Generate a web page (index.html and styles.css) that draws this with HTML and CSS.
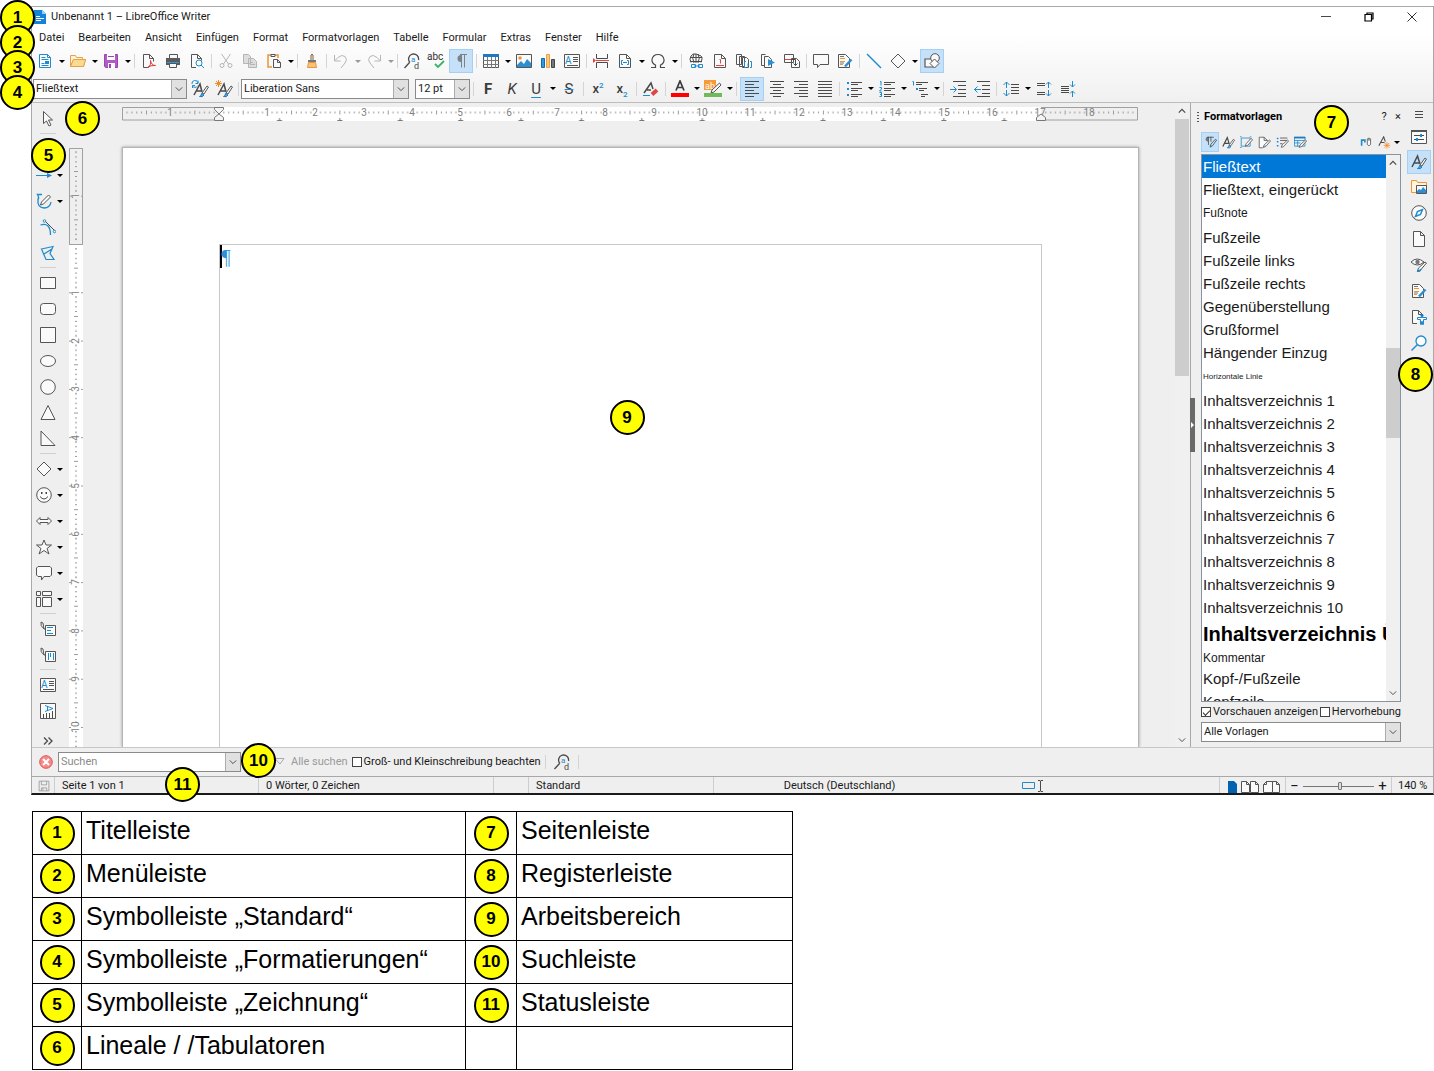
FILE: index.html
```html
<!DOCTYPE html>
<html lang="de">
<head>
<meta charset="utf-8">
<meta name="viewport" content="width=device-width, initial-scale=1">
<title>LibreOffice Writer – Programmfenster</title>
<link rel="stylesheet" href="styles.css">
</head>
<body>
<svg class="sprite" aria-hidden="true">
  <defs>
    <symbol id="app" viewBox="0 0 16 16"><path fill="#1583d8" d="M2 1h8l4 4v10H2z"/><path fill="#8fd0ff" d="M10 1l4 4h-4z"/><path stroke="#fff" d="M4 7.500h4M4 9.500h8M4 11.500h5"/></symbol>
    <symbol id="new" viewBox="0 0 16 16"><path class="b w" d="M2.500 1.500h8l3 3v10h-11z"/><path class="b" d="M10.500 1.500v3h3M4.500 4.500h4M4.500 6.500h7M4.500 12.500h7M4.500 10.500h3"/><path fill="#1e8bcd" d="M8 8h4v3H8z"/></symbol>
    <symbol id="open" viewBox="0 0 16 16"><path fill="#fff3dc" stroke="#e8a14a" d="M.500 13.500v-11h5l1 2h6v2M.500 13.500l3-7h12l-2 7z"/><path fill="#f8db8f" stroke="#e8a14a" d="M3.500 6.500h12l-2 7h-13z"/></symbol>
    <symbol id="save" viewBox="0 0 16 16"><path fill="#b15cc5" stroke="#9b45b2" d="M1.500 1.500h13v13h-12l-1-1z"/><path fill="#fff" d="M4 1h8v6H4zM5 10h7v5H5z"/><path fill="#9b45b2" d="M6 11h2v4H6zM5 3h6v1H5z"/></symbol>
    <symbol id="pdf" viewBox="0 0 16 16"><path class="w" d="M7.500 14.500h-5v-13h6l4 4v3M8.500 1.500v4h4"/><path fill="none" stroke="#d83a3a" d="M6.500 14.500q4-2 3-7 1 5 5 5-5-.500-8 2z"/></symbol>
    <symbol id="print" viewBox="0 0 16 16"><path class="w" d="M4.500 5v-3.500h8v3.500"/><path fill="#5c5c5c" d="M1 5h14v7H1z"/><path fill="#2d9ae0" d="M2 9h12v1H2z"/><path class="w" d="M4.500 10.500h7v4h-7z"/></symbol>
    <symbol id="preview" viewBox="0 0 16 16"><path class="w" d="M7 14.500H2.500v-13h6l4 4v2M8.500 1.500v4h4"/><circle class="b w" cx="10" cy="10" r="3"/><path class="b" d="M12 12l3 3"/></symbol>
    <symbol id="cut" viewBox="0 0 16 16"><path class="g" d="M3.500 1l7 10M12.500 1l-7 10"/><circle class="g" cx="4" cy="12.500" r="2"/><circle class="g" cx="12" cy="12.500" r="2"/></symbol>
    <symbol id="copy" viewBox="0 0 16 16"><path fill="#ddd" stroke="#b5b5b5" d="M1.500 1.500h5l2 2v7h-7zM6.500 5.500h5l3 3v6h-8z"/><path class="g" d="M8 9.500h3M8 11.500h5"/></symbol>
    <symbol id="paste" viewBox="0 0 16 16"><path fill="none" stroke="#e8973a" stroke-width="1.500" d="M5 2H2v12h4M9 2h3v3"/><path class="w" d="M5 1.500h4v2H5zM7.500 6.500h4l3 3v5h-7zM11.500 6.500v3h3"/></symbol>
    <symbol id="brush" viewBox="0 0 16 16"><path fill="#fff" stroke="#7a5a3a" d="M7 7V2q1-1.500 2 0v5"/><path fill="#777" d="M4 7h8v2H4z"/><path fill="#f8c27a" stroke="#e8973a" d="M4.500 9.500h7l1 5h-9z"/></symbol>
    <symbol id="undo" viewBox="0 0 16 16"><path class="g" d="M1.500 2v6h6M2 7.500l3-3q4-3.500 7-1 3 3 0 6.500l-4 5"/></symbol>
    <symbol id="redo" viewBox="0 0 16 16"><path class="g" d="M14.500 2v6h-6M14 7.500l-3-3q-4-3.500-7-1-3 3 0 6.500l4 5"/></symbol>
    <symbol id="find" viewBox="0 0 16 16"><path class="k" stroke-width="1.300" d="M14.500 7A5 5 0 1 0 6 9.500M5.500 9.500l-5 5.500"/><text class="bt" x="7" y="8.500" font-size="8">a</text><text x="10" y="15.500" font-size="9" fill="#4a4a4a">d</text></symbol>
    <symbol id="spell" viewBox="0 0 18 18"><text x="0" y="8" font-size="10" fill="#333">abc</text><path fill="none" stroke="#35b56a" stroke-width="1.800" d="M8 12l3 3 6-6"/></symbol>
    <symbol id="pil" viewBox="0 0 16 16"><path fill="#808080" d="M8 2v7a3.500 3.500 0 0 1 0-7z"/><path stroke="#808080" fill="none" d="M7 1.500h7M8.500 1.500v13M11.500 1.500v13"/></symbol>
    <symbol id="table" viewBox="0 0 16 16"><path class="w" d="M.500 1.500h15v13H.500z"/><path fill="#1e78c8" d="M0 1h16v3H0z"/><path stroke="#777" fill="none" d="M0 7.500h16M0 11.500h16M4.500 4v11M8.500 4v11M12.500 4v11"/></symbol>
    <symbol id="image" viewBox="0 0 16 16"><path class="w" d="M.500 1.500h15v13H.500z"/><circle cx="4" cy="5" r="1.800" fill="#f0953a"/><path fill="#2d8fd0" d="M1 12l4-4 3 3 3-5 4 4v4H1z"/></symbol>
    <symbol id="chart" viewBox="0 0 16 16"><path fill="#2d9ae0" stroke="#156aa8" d="M1.500 5.500h3v9h-3z"/><path fill="#f8c878" stroke="#e8a14a" d="M6.500 1.500h3v13h-3z"/><path fill="#777" stroke="#444" d="M11.500 6.500h3v8h-3z"/></symbol>
    <symbol id="tbox" viewBox="0 0 16 16"><path class="w" d="M.500 1.500h15v13H.500z"/><text class="bt" x="1" y="10.500" font-size="10">A</text><path stroke="#555" d="M9 4.500h5M9 6.500h5M9 8.500h5M3 12.500h11"/></symbol>
    <symbol id="break" viewBox="0 0 16 16"><path class="k" d="M3.500 1v4.500h11V1M3.500 15V9.500h11V15"/><path stroke="#e04545" d="M3 7.500h13"/><path fill="#e04545" d="M0 5l3 2.500L0 10z"/></symbol>
    <symbol id="field" viewBox="0 0 16 16"><path class="w" d="M2.500 1.500h7l4 4v9h-11zM9.500 1.500v4h4"/><path class="b" d="M6 7.500H4.500v4H6M10 7.500h1.500v4H10M6 9.500h4"/></symbol>
    <symbol id="omega" viewBox="0 0 16 16"><path class="k" stroke-width="1.200" d="M1 14.500h4.500V12Q1.500 10 2 6.500 3 1.500 8 1.500T14 6.500Q14.500 10 10.500 12v2.500H15"/></symbol>
    <symbol id="link" viewBox="0 0 16 16"><path class="k" d="M3 9.500Q1 6 3 3t5-2 5 2 0 6.500M2 4.500h12M2 8.500h12M8 1v9M6 1Q3.500 5 6 10M10 1q2.500 4 0 9"/><path class="b w" d="M3.500 11.500h4v3h-4zM10.500 11.500h4v3h-4z"/><path class="b" d="M6 13h6"/></symbol>
    <symbol id="foot" viewBox="0 0 16 16"><path class="w" d="M2.500 1.500h7l4 4v9h-11zM9.500 1.500v4h4"/><path stroke="#e04545" fill="none" d="M4 12.500h8M7.500 6.500h1v4"/></symbol>
    <symbol id="end" viewBox="0 0 16 16"><path class="w" d="M.500 1.500h5v10h-5zM3.500 3.500h5v10h-5zM6.500 4.500h4l2 2v8h-6z"/><path class="b w" d="M10 8.500H8.500v6H10M14 8.500h1.500v6H14M12 10.500v3"/></symbol>
    <symbol id="book" viewBox="0 0 16 16"><path class="w" d="M4 12.500H1.500v-11h4M4.500 3.500h4l3 3v8h-7z"/><path fill="#2d8fd0" d="M8 6l7 3.500L8 13z"/></symbol>
    <symbol id="cross" viewBox="0 0 16 16"><path class="w" d="M.500 1.500h9v8h-9zM7.500 5.500h5l3 3v6h-8z"/><path stroke="#e04545" d="M1 6.500h6"/><path class="k" d="M7 6.500h4.500v6M9.500 10.500l2 2 2-2"/></symbol>
    <symbol id="comment" viewBox="0 0 16 16"><path class="w" d="M.500 1.500h15v10H7l-2.500 3v-3h-4z"/></symbol>
    <symbol id="track" viewBox="0 0 16 16"><path class="w" d="M1.500 1.500h7l4 4v9h-11z"/><path stroke="#e8973a" d="M3 5.500h5M3 8.500h5M3 11.500h3"/><path stroke="#777" d="M3 3.500h4M3 10h4"/><path stroke="#2d8fd0" stroke-width="2.500" d="M14.500 6.500L8 13.500"/></symbol>
    <symbol id="line" viewBox="0 0 16 16"><path class="b" stroke-width="1.400" d="M1 1l14 14"/></symbol>
    <symbol id="diamond" viewBox="0 0 16 16"><path class="w" d="M8 1l7 7-7 7-7-7z"/></symbol>
    <symbol id="shapes" viewBox="0 0 16 16"><path class="w" stroke-width="1.200" d="M1 6h9v8H1z"/><circle class="w" cx="11" cy="5" r="4.300"/><path class="w" d="M10.500 6l4.500 4.500-4.500 4.500L6 10.500z"/></symbol>
    <symbol id="abrush" viewBox="0 0 16 16"><path class="k" stroke-width="1.500" d="M1 13L6.500 2 9 10M3.500 9H8"/><path class="w" d="M9 11l5-7 1.500 1L11 12z"/><path fill="#4aa8e8" stroke="#1e78c8" d="M6.500 14.500q2-.500 2-3l2.500 1.500q-1 2.500-4.500 1.500z"/></symbol>
    <symbol id="update" viewBox="0 0 18 18"><path class="k" stroke-width="1.500" d="M3 15L9 4l2 8M5 11h5"/><path class="w" d="M11 13l5-7 1.500 1L13 14z"/><path fill="#4aa8e8" stroke="#1e78c8" d="M8.500 16.500q2-.500 2-3l2.500 1.500q-1 2.500-4.500 1.500z"/><path class="b" d="M1 4a3 3 0 0 1 6-1M7 .500v3H4.500M1.500 8V5.500H4M1.500 6a3 3 0 0 0 5 0"/></symbol>
    <symbol id="newstyle" viewBox="0 0 18 18"><path class="k" stroke-width="1.500" d="M3 15L9 4l2 8M5 11h5"/><path class="w" d="M11 13l5-7 1.500 1L13 14z"/><path fill="#4aa8e8" stroke="#1e78c8" d="M8.500 16.500q2-.500 2-3l2.500 1.500q-1 2.500-4.500 1.500z"/><path stroke="#f08a24" d="M0 3.500h7M3.500 0v7M1 1l5 5M6 1L1 6"/></symbol>
    <symbol id="eraser" viewBox="0 0 16 16"><path class="k" stroke-width="1.500" d="M1 12L8 2l2 6M4 9h4"/><path stroke="#e04545" stroke-width="4" d="M9 13.500l5-4.500"/><path class="b" d="M0 14.500h7"/></symbol>
    <symbol id="fcolor" viewBox="0 0 18 18"><path fill="none" stroke="#3c3c3c" stroke-width="1.700" d="M5 10.500L9 1l4 9.500M6 7.500h6"/><path fill="red" d="M0 13h18v4H0z"/></symbol>
    <symbol id="hilite" viewBox="0 0 18 18"><path fill="#f79a3a" d="M0 0h12v10H0z"/><text x="1" y="9" font-size="9" fill="#fff">ab</text><path class="w" d="M15.500 3l1.500 2-7 7-3 1 1-3z"/><path fill="#6dbb5a" d="M0 13h18v4H0z"/></symbol>
    <symbol id="al" viewBox="0 0 16 16"><path class="k" d="M1 .500h14M1 3.500h9M1 6.500h14M1 9.500h9M1 12.500h14M1 15.500h9"/></symbol>
    <symbol id="ac" viewBox="0 0 16 16"><path class="k" d="M1 .500h14M4 3.500h8M1 6.500h14M4 9.500h8M1 12.500h14M4 15.500h8"/></symbol>
    <symbol id="ar" viewBox="0 0 16 16"><path class="k" d="M1 .500h14M6 3.500h9M1 6.500h14M6 9.500h9M1 12.500h14M6 15.500h9"/></symbol>
    <symbol id="aj" viewBox="0 0 16 16"><path class="k" d="M1 .500h14M1 3.500h14M1 6.500h14M1 9.500h14M1 12.500h14M1 15.500h14"/></symbol>
    <symbol id="bullets" viewBox="0 0 16 16"><path class="k" d="M5 1.500h11M5 3.500h7M5 7.500h11M5 9.500h7M5 13.500h11M5 15.500h7"/><path fill="#1e8bcd" d="M1 1h2v2H1zM1 7h2v2H1zM1 13h2v2H1z"/></symbol>
    <symbol id="numbers" viewBox="0 0 16 16"><path class="k" d="M5 1.500h11M5 3.500h7M5 7.500h11M5 9.500h7M5 13.500h11M5 15.500h7"/><path class="b" d="M1 .500h1v4M.500 6.500h2v1.500l-2 2h2M.500 11.500h2v4h-2M1 13.500h1"/></symbol>
    <symbol id="outline" viewBox="0 0 16 16"><path class="k" d="M4 1.500h12M4 3.500h6M7 7.500h8M7 9.500h5M9 13.500h7M9 15.500h4"/><path class="b" d="M.500.500h1v4"/><path fill="#1e8bcd" d="M4 7h2v2H4z"/></symbol>
    <symbol id="indent" viewBox="0 0 16 16"><path class="k" d="M3 .500h13M8 4.500h8M8 8.500h8M8 12.500h8M3 15.500h13"/><path class="b" d="M0 8.500h6M3.500 5.500l3 3-3 3"/></symbol>
    <symbol id="outdent" viewBox="0 0 16 16"><path class="k" d="M3 .500h13M8 4.500h8M8 8.500h8M8 12.500h8M3 15.500h13"/><path class="b" d="M7 8.500H0M3.500 5.500l-3 3 3 3"/></symbol>
    <symbol id="spacing" viewBox="0 0 16 16"><path class="k" d="M8 3.500h8M8 6.500h8M8 9.500h8M8 12.500h8"/><path class="b" d="M3.500 1v6M.500 4l3-3 3 3M3.500 9v6M.500 12l3 3 3-3"/></symbol>
    <symbol id="incp" viewBox="0 0 16 16"><path class="k" d="M1 2.500h8M1 4.500h8M1 11.500h8M1 13.500h8"/><path class="b" d="M12.500 1v6M10 3.500L12.500 1 15 3.500M12.500 9v6M10 12.500l2.500 2.500 2.500-2.500"/></symbol>
    <symbol id="decp" viewBox="0 0 16 16"><path class="k" d="M1 5.500h8M1 7.500h8M1 9.500h8M1 11.500h8"/><path class="b" d="M12.500 0v6M10 3.500L12.500 6 15 3.500M12.500 16v-6M10 12.500l2.500-2.500 2.500 2.500"/></symbol>
    <symbol id="pointer" viewBox="0 0 16 16"><path class="w" d="M3.500.500v12l3-2.500 2.500 5 2-1-2.500-5h4z"/></symbol>
    <symbol id="arrowline" viewBox="0 0 16 16"><path class="b" d="M0 8.500h12"/><path fill="#1e8bcd" d="M11 6l5 2.500-5 2.500z"/></symbol>
    <symbol id="curve" viewBox="0 0 16 16"><path class="b" stroke-width="1.300" d="M6 1.500H1.500q2 3 .5 5-1 8 6 8.500 6 0 7-6"/><path class="w" d="M12.500 2l2 2-7 7-3 1 1-3z"/></symbol>
    <symbol id="bezier" viewBox="0 0 16 16"><path class="b" stroke-width="1.300" d="M.500 6q10-3 10 10"/><path class="k" d="M5 2l10 10"/><circle class="b w" cx="4.500" cy="2" r="1.300"/><circle class="b w" cx="14.500" cy="12.500" r="1.300"/></symbol>
    <symbol id="poly" viewBox="0 0 16 16"><path class="b" stroke-width="1.200" d="M1.500 4L13 1.500l-3 7 4 6H6zM4 9l8-5"/></symbol>
    <symbol id="rect" viewBox="0 0 16 16"><path class="w" d="M.500 2.500h15v11H.500z"/></symbol>
    <symbol id="rrect" viewBox="0 0 16 16"><rect class="w" x=".5" y="2.500" width="15" height="11" rx="3"/></symbol>
    <symbol id="square" viewBox="0 0 16 16"><path class="w" d="M.500.500h15v15H.500z"/></symbol>
    <symbol id="ellipse" viewBox="0 0 16 16"><ellipse class="w" cx="8" cy="8" rx="7.500" ry="5.500"/></symbol>
    <symbol id="circle" viewBox="0 0 16 16"><circle class="w" cx="8" cy="8" r="7.300"/></symbol>
    <symbol id="tri" viewBox="0 0 16 16"><path class="w" d="M8 .500l7 14H1z"/></symbol>
    <symbol id="rtri" viewBox="0 0 16 16"><path class="w" d="M1 0v14.500h14z"/></symbol>
    <symbol id="smile" viewBox="0 0 16 16"><circle class="w" cx="8" cy="8" r="7.300"/><path class="k" d="M4 9.500q4 5 8 0"/><path fill="#444" d="M5 5h1.500v2H5zM9.500 5H11v2H9.500z"/></symbol>
    <symbol id="harrow" viewBox="0 0 16 16"><path class="w" d="M.500 8L4 4.500v2h8v-2L15.500 8 12 11.500v-2H4v2z"/></symbol>
    <symbol id="star" viewBox="0 0 16 16"><path class="w" d="M8 1l2 5h5.500l-4.500 3.500 2 5.500-5-3.500L3 15l2-5.500L.500 6H6z"/></symbol>
    <symbol id="balloon" viewBox="0 0 16 16"><path class="w" d="M2 1.500h12l1.500 1.500v7L14 11.500H8L5.500 15v-3.500H2L.500 10V3z"/></symbol>
    <symbol id="flow" viewBox="0 0 16 16"><path class="w" d="M.500.500h4v4h-4zM6.500.500h9v4h-9zM.500 6.500h4v9h-4zM6.500 6.500h9v9h-9z"/></symbol>
    <symbol id="callh" viewBox="0 0 16 16"><path class="w" d="M1 1l2 1 1 6h3M1 1q-1 4 3 7"/><path class="w" d="M5.500 4.500h10v10h-10z"/><path class="b" d="M7 6.500h6M7 9.500h4M7 12.500h6"/></symbol>
    <symbol id="callv" viewBox="0 0 16 16"><path class="w" d="M1 1l2 1 1 6h3M1 1q-1 4 3 7"/><path class="w" d="M5.500 4.500h10v10h-10z"/><path class="b" d="M8.500 6v7M10.500 6v4M13.500 6v7"/></symbol>
    <symbol id="vbox" viewBox="0 0 16 16"><path class="w" d="M.500.500h15v15H.500z"/><path class="b" d="M5 2.500l8 3-8 3M7.500 3v5"/><path class="k" d="M3.500 11v4M6.500 10v5M9.500 10v5M12.500 8v7"/></symbol>
    <symbol id="close" viewBox="0 0 16 16"><circle cx="8" cy="8" r="6.300" fill="#f58a8a" stroke="#e05555"/><path stroke="#fff" stroke-width="2" d="M5 5l6 6M11 5l-6 6"/></symbol>
    <symbol id="gsave" viewBox="0 0 16 16"><path fill="none" stroke="#909090" d="M1.500 1.500h13v13h-13zM4.500 1.500v5h7v-5M4.500 14.500v-4h7v4M6.500 11v3"/></symbol>
    <symbol id="frame" viewBox="0 0 16 16"><path class="b" fill="#fff" d="M1.500 2.500h11v10h-11zM0 1h2M12 1h2M0 14h2"/><path class="w" d="M13.500 3l2 1.500-6 7-3 1 1-3z"/></symbol>
    <symbol id="pagest" viewBox="0 0 16 16"><path class="w" d="M6 14.500H1.500v-13h6l4 4v1M7.500 1.500v4h4M14 5l1.500 1-6 7-3 1 1-3z"/><path class="b" d="M7 13.500l2-2"/></symbol>
    <symbol id="listst" viewBox="0 0 16 16"><path class="k" d="M5 2.500h9M5 5.500h9M5 9.500h3"/><path fill="#1e8bcd" d="M1 2h2v2H1zM1 6h2v2H1zM1 11h2v2H1z"/><path class="w" d="M14 5l1.500 1-6 7-3 1 1-3z"/></symbol>
    <symbol id="tablest" viewBox="0 0 16 16"><path class="b" fill="#fff" d="M.500 1.500h13v11H.500zM0 5.500h13M0 8.500h8M4.500 5v8"/><path fill="#1e78c8" d="M0 1h14v2H0z"/><path class="w" d="M14 5l1.500 1-6 7-3 1 1-3z"/></symbol>
    <symbol id="parst" viewBox="0 0 16 16"><path fill="#777" d="M5 1v6a3 3 0 0 1 0-6z"/><path class="k" d="M4 1.500h8M5.500 1v10M8.500 1v6M14 4l1.500 1-5 7-3 1 1-3z"/><path class="b" d="M7 13.500q2 1 3-1.500"/></symbol>
    <symbol id="fill" viewBox="0 0 16 16"><path fill="#1e8bcd" d="M1 4h6v4H5V6H3v6H1z"/><path class="w" d="M9 3.500h4v7q-2 3-4 0zM11 2v4"/></symbol>
    <symbol id="starA" viewBox="0 0 16 16"><path class="k" stroke-width="1.300" d="M1 12L7 1l2 6M3 8h5"/><path stroke="#f08a24" d="M7 11.500h8M11 7.500v8M8 8.500l6 6M14 8.500l-6 6"/></symbol>
    <symbol id="props" viewBox="0 0 16 16"><path class="w" d="M.500 1.500h15v13H.500z"/><path fill="#555" d="M0 1h16v2H0z"/><path class="k" d="M3 6.500h10M3 10.500h10"/><path fill="#1e8bcd" d="M9 5h2v3H9zM5 9h2v3H5z"/></symbol>
    <symbol id="gallery" viewBox="0 0 16 16"><path fill="#fff3dc" stroke="#e8973a" d="M.500 13.500v-12h5l1 2h9v10z"/><path class="w" d="M5.500 6.500h10v8h-10z"/><path fill="#2d8fd0" d="M6 12l2-2 2 1 2-3 3 3v3H6z"/></symbol>
    <symbol id="compass" viewBox="0 0 16 16"><circle class="w" cx="8" cy="8" r="7.300"/><path class="b" stroke-width="1.500" d="M11.500 4.500L9.500 9.500l-5 2 2-5z"/></symbol>
    <symbol id="page" viewBox="0 0 16 16"><path class="w" d="M2.500.500h7l4 4v11h-11zM9.500.500v4h4"/></symbol>
    <symbol id="inspect" viewBox="0 0 16 16"><path class="w" d="M0 5q6-6 13 0-7 6-13 0z"/><circle cx="6.500" cy="5" r="2.200" fill="#777"/><path class="w" d="M14 5l1.500 1-6 7-3 1 1-3z"/><path class="b" stroke-width="1.500" d="M6 14q3 1 4-2"/></symbol>
    <symbol id="access" viewBox="0 0 16 16"><path class="w" d="M6 14.500H1.500v-13h6l4 4v1M7.500 1.500v4h4"/><path class="b w" d="M6.500 8.500h9v2h-3v5h-1v-3h-1v3h-1v-5h-3z"/><circle cx="11" cy="6.500" r="1.500" fill="#1e78c8"/></symbol>
    <symbol id="lens" viewBox="0 0 16 16"><circle class="b w" cx="10" cy="6" r="5" stroke-width="1.300"/><path class="b" stroke-width="1.400" d="M6.500 9.500L.500 15.500"/></symbol>
    <symbol id="down" viewBox="0 0 10 10"><path class="k" stroke-width="1.200" d="M1 3l4 4 4-4"/></symbol>
    <symbol id="up" viewBox="0 0 10 10"><path class="k" stroke-width="1.500" d="M1 7l4-4 4 4"/></symbol>
  </defs>
</svg>

<main class="window">
  <header class="chrome">
    <div class="titlebar">
      <svg class="ico"><use href="#app"/></svg>
      <h1 class="title">Unbenannt 1 – LibreOffice Writer</h1>
      <div class="winbuttons">
        <button aria-label="Minimieren"><svg viewBox="0 0 10 10"><path class="k" d="M0 4.500h10"/></svg></button>
        <button aria-label="Wiederherstellen"><svg viewBox="0 0 10 10"><path fill="none" stroke="#000" stroke-width="1.200" d="M1 2.500h6.500V9H1zM3 2.500V1h6v6H7.500"/></svg></button>
        <button aria-label="Schließen"><svg viewBox="0 0 10 10"><path fill="none" stroke="#333" d="M.500.500l9 9M9.500.500l-9 9"/></svg></button>
      </div>
    </div>
    <nav class="menubar">
      <button>Datei</button><button>Bearbeiten</button><button>Ansicht</button><button>Einfügen</button><button>Format</button><button>Formatvorlagen</button><button>Tabelle</button><button>Formular</button><button>Extras</button><button>Fenster</button><button>Hilfe</button>
    </nav>
    <div class="toolbar" role="toolbar" aria-label="Standard">
      <button class="tool" aria-label="Neu"><svg class="ico"><use href="#new"/></svg></button><button class="drop" aria-label="Neu: Auswahl"></button>
      <button class="tool" aria-label="Öffnen"><svg class="ico"><use href="#open"/></svg></button><button class="drop" aria-label="Öffnen: Auswahl"></button>
      <button class="tool" aria-label="Speichern"><svg class="ico"><use href="#save"/></svg></button><button class="drop" aria-label="Speichern: Auswahl"></button>
      <i class="sep"></i>
      <button class="tool" aria-label="PDF"><svg class="ico"><use href="#pdf"/></svg></button>
      <button class="tool" aria-label="Drucken"><svg class="ico"><use href="#print"/></svg></button>
      <button class="tool" aria-label="Druckvorschau"><svg class="ico"><use href="#preview"/></svg></button>
      <i class="sep"></i>
      <button class="tool" aria-label="Ausschneiden"><svg class="ico"><use href="#cut"/></svg></button>
      <button class="tool" aria-label="Kopieren"><svg class="ico"><use href="#copy"/></svg></button>
      <button class="tool" aria-label="Einfügen"><svg class="ico"><use href="#paste"/></svg></button><button class="drop" aria-label="Einfügen: Auswahl"></button>
      <i class="sep"></i>
      <button class="tool" aria-label="Format übertragen"><svg class="ico"><use href="#brush"/></svg></button>
      <i class="sep"></i>
      <button class="tool" aria-label="Rückgängig"><svg class="ico"><use href="#undo"/></svg></button><button class="drop off" aria-label="Rückgängig: Auswahl"></button>
      <button class="tool" aria-label="Wiederherstellen"><svg class="ico"><use href="#redo"/></svg></button><button class="drop off" aria-label="Wiederherstellen: Auswahl"></button>
      <i class="sep"></i>
      <button class="tool" aria-label="Suchen und Ersetzen"><svg class="ico"><use href="#find"/></svg></button>
      <button class="tool" aria-label="Rechtschreibung"><svg class="ico wide"><use href="#spell"/></svg></button>
      <button class="tool on" aria-label="Formatierungszeichen"><svg class="ico"><use href="#pil"/></svg></button>
      <i class="sep"></i>
      <button class="tool" aria-label="Tabelle"><svg class="ico"><use href="#table"/></svg></button><button class="drop" aria-label="Tabelle: Auswahl"></button>
      <button class="tool" aria-label="Bild"><svg class="ico"><use href="#image"/></svg></button>
      <button class="tool" aria-label="Diagramm"><svg class="ico"><use href="#chart"/></svg></button>
      <button class="tool" aria-label="Textfeld"><svg class="ico"><use href="#tbox"/></svg></button>
      <i class="sep"></i>
      <button class="tool" aria-label="Seitenumbruch"><svg class="ico"><use href="#break"/></svg></button>
      <button class="tool" aria-label="Feldbefehl"><svg class="ico"><use href="#field"/></svg></button><button class="drop" aria-label="Feldbefehl: Auswahl"></button>
      <button class="tool" aria-label="Sonderzeichen"><svg class="ico"><use href="#omega"/></svg></button><button class="drop" aria-label="Sonderzeichen: Auswahl"></button>
      <i class="sep"></i>
      <button class="tool" aria-label="Hyperlink"><svg class="ico"><use href="#link"/></svg></button>
      <button class="tool" aria-label="Fußnote"><svg class="ico"><use href="#foot"/></svg></button>
      <button class="tool" aria-label="Endnote"><svg class="ico"><use href="#end"/></svg></button>
      <button class="tool" aria-label="Lesezeichen"><svg class="ico"><use href="#book"/></svg></button>
      <button class="tool" aria-label="Querverweis"><svg class="ico"><use href="#cross"/></svg></button>
      <i class="sep"></i>
      <button class="tool" aria-label="Kommentar"><svg class="ico"><use href="#comment"/></svg></button>
      <button class="tool" aria-label="Änderungen"><svg class="ico"><use href="#track"/></svg></button>
      <i class="sep"></i>
      <button class="tool" aria-label="Linie"><svg class="ico"><use href="#line"/></svg></button>
      <button class="tool" aria-label="Standardformen"><svg class="ico"><use href="#diamond"/></svg></button><button class="drop" aria-label="Standardformen: Auswahl"></button>
      <button class="tool on" aria-label="Zeichnungsfunktionen"><svg class="ico"><use href="#shapes"/></svg></button>
    </div>
    <div class="toolbar format" role="toolbar" aria-label="Formatierungen">
      <div class="combo w-style"><select aria-label="Absatzvorlage"><option>Fließtext</option></select><span><svg><use href="#down"/></svg></span></div>
      <button class="tool" aria-label="Vorlage aktualisieren"><svg class="ico wide"><use href="#update"/></svg></button>
      <button class="tool" aria-label="Neue Vorlage"><svg class="ico wide"><use href="#newstyle"/></svg></button>
      <i class="sep"></i>
      <div class="combo w-font"><select aria-label="Schriftart"><option>Liberation Sans</option></select><span><svg><use href="#down"/></svg></span></div>
      <div class="combo w-size"><select aria-label="Schriftgröße"><option>12 pt</option></select><span><svg><use href="#down"/></svg></span></div>
      <i class="sep"></i>
      <button class="tool glyph"><b>F</b></button>
      <button class="tool glyph"><em>K</em></button>
      <button class="tool glyph"><u>U</u></button><button class="drop" aria-label="Unterstreichen: Auswahl"></button>
      <button class="tool glyph"><s>S</s></button>
      <i class="sep"></i>
      <button class="tool glyph small"><span>x<sup>2</sup></span></button>
      <button class="tool glyph small"><span>x<sub>2</sub></span></button>
      <i class="sep"></i>
      <button class="tool" aria-label="Direkte Formatierung löschen"><svg class="ico"><use href="#eraser"/></svg></button>
      <i class="sep"></i>
      <button class="tool" aria-label="Schriftfarbe"><svg class="ico wide"><use href="#fcolor"/></svg></button><button class="drop" aria-label="Schriftfarbe: Auswahl"></button>
      <button class="tool" aria-label="Zeichenhervorhebung"><svg class="ico wide"><use href="#hilite"/></svg></button><button class="drop" aria-label="Zeichenhervorhebung: Auswahl"></button>
      <i class="sep"></i>
      <button class="tool on" aria-label="Linksbündig"><svg class="ico"><use href="#al"/></svg></button>
      <button class="tool" aria-label="Zentriert"><svg class="ico"><use href="#ac"/></svg></button>
      <button class="tool" aria-label="Rechtsbündig"><svg class="ico"><use href="#ar"/></svg></button>
      <button class="tool" aria-label="Blocksatz"><svg class="ico"><use href="#aj"/></svg></button>
      <i class="sep"></i>
      <button class="tool" aria-label="Aufzählung"><svg class="ico"><use href="#bullets"/></svg></button><button class="drop" aria-label="Aufzählung: Auswahl"></button>
      <button class="tool" aria-label="Nummerierung"><svg class="ico"><use href="#numbers"/></svg></button><button class="drop" aria-label="Nummerierung: Auswahl"></button>
      <button class="tool" aria-label="Gliederung"><svg class="ico"><use href="#outline"/></svg></button><button class="drop" aria-label="Gliederung: Auswahl"></button>
      <i class="sep"></i>
      <button class="tool" aria-label="Einzug erhöhen"><svg class="ico"><use href="#indent"/></svg></button>
      <button class="tool" aria-label="Einzug verringern"><svg class="ico"><use href="#outdent"/></svg></button>
      <i class="sep"></i>
      <button class="tool" aria-label="Zeilenabstand"><svg class="ico"><use href="#spacing"/></svg></button><button class="drop" aria-label="Zeilenabstand: Auswahl"></button>
      <button class="tool" aria-label="Absatzabstand erhöhen"><svg class="ico"><use href="#incp"/></svg></button>
      <button class="tool" aria-label="Absatzabstand verringern"><svg class="ico"><use href="#decp"/></svg></button>
    </div>
  </header>

  <div class="work">
    <div class="toolbox" role="toolbar" aria-label="Zeichnung">
      <div><button class="tool" aria-label="Auswahl"><svg class="ico"><use href="#pointer"/></svg></button></div>
      <hr>
      <div><button class="tool" aria-label="Linie einfügen"><svg class="ico"><use href="#line"/></svg></button></div>
      <div><button class="tool" aria-label="Linien und Pfeile"><svg class="ico"><use href="#arrowline"/></svg></button><button class="drop" aria-label="Pfeile: Auswahl"></button></div>
      <div><button class="tool" aria-label="Kurven"><svg class="ico"><use href="#curve"/></svg></button><button class="drop" aria-label="Kurven: Auswahl"></button></div>
      <div><button class="tool" aria-label="Kurve"><svg class="ico"><use href="#bezier"/></svg></button></div>
      <div><button class="tool" aria-label="Polygon"><svg class="ico"><use href="#poly"/></svg></button></div>
      <hr>
      <div><button class="tool" aria-label="Rechteck"><svg class="ico"><use href="#rect"/></svg></button></div>
      <div><button class="tool" aria-label="Abgerundetes Rechteck"><svg class="ico"><use href="#rrect"/></svg></button></div>
      <div><button class="tool" aria-label="Quadrat"><svg class="ico"><use href="#square"/></svg></button></div>
      <div><button class="tool" aria-label="Ellipse"><svg class="ico"><use href="#ellipse"/></svg></button></div>
      <div><button class="tool" aria-label="Kreis"><svg class="ico"><use href="#circle"/></svg></button></div>
      <div><button class="tool" aria-label="Dreieck"><svg class="ico"><use href="#tri"/></svg></button></div>
      <div><button class="tool" aria-label="Rechtwinkliges Dreieck"><svg class="ico"><use href="#rtri"/></svg></button></div>
      <hr>
      <div><button class="tool" aria-label="Standardformen"><svg class="ico"><use href="#diamond"/></svg></button><button class="drop" aria-label="Standardformen: Auswahl"></button></div>
      <div><button class="tool" aria-label="Symbolformen"><svg class="ico"><use href="#smile"/></svg></button><button class="drop" aria-label="Symbolformen: Auswahl"></button></div>
      <div><button class="tool" aria-label="Blockpfeile"><svg class="ico"><use href="#harrow"/></svg></button><button class="drop" aria-label="Blockpfeile: Auswahl"></button></div>
      <div><button class="tool" aria-label="Sterne"><svg class="ico"><use href="#star"/></svg></button><button class="drop" aria-label="Sterne: Auswahl"></button></div>
      <div><button class="tool" aria-label="Legenden"><svg class="ico"><use href="#balloon"/></svg></button><button class="drop" aria-label="Legenden: Auswahl"></button></div>
      <div><button class="tool" aria-label="Flussdiagramm"><svg class="ico"><use href="#flow"/></svg></button><button class="drop" aria-label="Flussdiagramm: Auswahl"></button></div>
      <hr>
      <div><button class="tool" aria-label="Legende"><svg class="ico"><use href="#callh"/></svg></button></div>
      <div><button class="tool" aria-label="Vertikale Legende"><svg class="ico"><use href="#callv"/></svg></button></div>
      <hr>
      <div><button class="tool" aria-label="Textfeld"><svg class="ico"><use href="#tbox"/></svg></button></div>
      <div><button class="tool" aria-label="Vertikaler Text"><svg class="ico"><use href="#vbox"/></svg></button></div>
      <button class="more" aria-label="Weitere"><svg width="10" height="8" viewBox="0 0 10 8"><path class="k" stroke-width="1.300" d="M1 .500L4.500 4 1 7.500M5.500.500L9 4 5.500 7.500"/></svg></button>
    </div>

    <div class="vruler">
      <svg width="14" height="820">
        <defs><pattern id="vt" patternUnits="userSpaceOnUse" x="0" y="96" width="14" height="48.300">
          <path stroke="#999" d="M6 4.800h2M6 9.700h2M6 14.500h2M6 19.300h2M5 24.200h4M6 29h2M6 33.800h2M6 38.600h2M6 43.500h2M0 .500h2M12 .500h2"/></pattern></defs>
        <path fill="#fff" d="M0 96h14v724H0z"/><path fill="url(#vt)" d="M0 0h14v820H0z"/>
        <path fill="none" stroke="#a0a0a0" d="M.500.500h13v96H.500z"/>
        <g class="num"><text transform="translate(10 48) rotate(-90)">1</text><text transform="translate(10 145) rotate(-90)">1</text><text transform="translate(10 193) rotate(-90)">2</text><text transform="translate(10 241) rotate(-90)">3</text><text transform="translate(10 290) rotate(-90)">4</text><text transform="translate(10 338) rotate(-90)">5</text><text transform="translate(10 386) rotate(-90)">6</text><text transform="translate(10 434) rotate(-90)">7</text><text transform="translate(10 483) rotate(-90)">8</text><text transform="translate(10 531) rotate(-90)">9</text><text transform="translate(10 579) rotate(-90)">10</text></g>
      </svg>
    </div>

    <div class="canvas">
      <svg class="hruler" width="1016" height="20">
        <defs><pattern id="ht" patternUnits="userSpaceOnUse" x="97" y="0" width="48.350" height="14">
          <path stroke="#999" d="M4.800 4.500v2M9.700 4.500v2M14.500 4.500v2M19.300 4.500v2M24.200 3.500v4M29 4.500v2M33.800 4.500v2M38.700 4.500v2M43.500 4.500v2"/></pattern>
          <pattern id="tabs" patternUnits="userSpaceOnUse" x="127" y="0" width="60.400" height="20"><path stroke="#777" fill="none" d="M28 13.500h5M30.500 11v2"/></pattern></defs>
        <path fill="#fff" d="M97 0h822v14H97z"/>
        <path fill="url(#ht)" d="M4 0h1008v14H4z"/><path fill="url(#tabs)" d="M127 0h780v20H127z"/>
        <path fill="none" stroke="#a0a0a0" d="M97 .500H.500V13H97M919 .500h96.500V13H919"/>
        <g class="num"><text x="48" y="9">1</text><text x="145" y="9">1</text><text x="193" y="9">2</text><text x="242" y="9">3</text><text x="290" y="9">4</text><text x="338" y="9">5</text><text x="387" y="9">6</text><text x="435" y="9">7</text><text x="483" y="9">8</text><text x="532" y="9">9</text><text x="580" y="9">10</text><text x="628" y="9">11</text><text x="677" y="9">12</text><text x="725" y="9">13</text><text x="773" y="9">14</text><text x="822" y="9">15</text><text x="870" y="9">16</text><text x="918" y="9">17</text><text x="967" y="9">18</text></g>
        <path fill="#f4f4f4" stroke="#777" d="M92.500.500h9v2l-4.500 4.500-4.500-4.500zM92.500 13.500h9v-3L97 7l-4.500 3.500zM914.500 13.500h9v-3L919 7l-4.500 3.500z"/>
      </svg>
      <div class="sheet"><div class="textarea"><span class="caret"></span><span class="pilcrow">¶</span></div></div>
    </div>

    <div class="scroll main-scroll"><svg><use href="#up"/></svg><i></i><svg><use href="#down"/></svg></div>

    <aside class="sidebar">
      <button class="handle" aria-label="Seitenleiste ausblenden"></button>
      <section class="panel">
        <div class="panelhead"><i class="grip"></i><h2>Formatvorlagen</h2><button>?</button><button>×</button></div>
        <div class="stylebar">
          <button class="on" aria-label="Absatzvorlagen"><svg><use href="#parst"/></svg></button><button aria-label="Zeichenvorlagen"><svg><use href="#abrush"/></svg></button><button aria-label="Rahmenvorlagen"><svg><use href="#frame"/></svg></button><button aria-label="Seitenvorlagen"><svg><use href="#pagest"/></svg></button><button aria-label="Listenvorlagen"><svg><use href="#listst"/></svg></button><button aria-label="Tabellenvorlagen"><svg><use href="#tablest"/></svg></button>
          <button class="push" aria-label="Gießkannenmodus"><svg><use href="#fill"/></svg></button><button aria-label="Vorlagenaktionen"><svg><use href="#starA"/></svg></button><button class="drop" aria-label="Vorlagenaktionen: Auswahl"></button>
        </div>
        <div class="listbox">
          <ul>
            <li class="sel">Fließtext</li><li>Fließtext, eingerückt</li><li class="note">Fußnote</li><li>Fußzeile</li><li>Fußzeile links</li><li>Fußzeile rechts</li><li>Gegenüberstellung</li><li>Grußformel</li><li>Hängender Einzug</li><li class="hair">Horizontale Linie</li><li>Inhaltsverzeichnis 1</li><li>Inhaltsverzeichnis 2</li><li>Inhaltsverzeichnis 3</li><li>Inhaltsverzeichnis 4</li><li>Inhaltsverzeichnis 5</li><li>Inhaltsverzeichnis 6</li><li>Inhaltsverzeichnis 7</li><li>Inhaltsverzeichnis 8</li><li>Inhaltsverzeichnis 9</li><li>Inhaltsverzeichnis 10</li><li class="head">Inhaltsverzeichnis Überschrift</li><li class="remark">Kommentar</li><li>Kopf-/Fußzeile</li><li>Kopfzeile</li>
          </ul>
          <div class="scroll list-scroll"><svg><use href="#up"/></svg><i></i><svg><use href="#down"/></svg></div>
        </div>
        <div class="checks"><label><input type="checkbox" checked>Vorschauen anzeigen</label><label><input type="checkbox">Hervorhebung</label></div>
        <div class="combo"><select aria-label="Vorlagenfilter"><option>Alle Vorlagen</option></select><span><svg><use href="#down"/></svg></span></div>
      </section>
      <nav class="tabs">
        <button class="menu" aria-label="Einstellungen"><svg viewBox="0 0 8 8"><path class="k" d="M0 1.500h8M0 4.500h8M0 7.500h8"/></svg></button>
        <button aria-label="Eigenschaften"><svg class="ico"><use href="#props"/></svg></button>
        <button class="on" aria-label="Formatvorlagen"><svg class="ico"><use href="#abrush"/></svg></button>
        <button aria-label="Galerie"><svg class="ico"><use href="#gallery"/></svg></button>
        <button aria-label="Navigator"><svg class="ico"><use href="#compass"/></svg></button>
        <button aria-label="Seite"><svg class="ico"><use href="#page"/></svg></button>
        <button aria-label="Stil-Inspektor"><svg class="ico"><use href="#inspect"/></svg></button>
        <button aria-label="Änderungen verwalten"><svg class="ico"><use href="#track"/></svg></button>
        <button aria-label="Barrierefreiheit"><svg class="ico"><use href="#access"/></svg></button>
        <button aria-label="Suchen"><svg class="ico"><use href="#lens"/></svg></button>
      </nav>
    </aside>
  </div>

  <div class="searchbar">
    <button class="tool" aria-label="Suchleiste schließen"><svg class="ico"><use href="#close"/></svg></button>
    <div class="combo w-search"><input type="text" placeholder="Suchen" aria-label="Suchen"><span><svg><use href="#down"/></svg></span></div>
    <button class="next" aria-label="Weitersuchen"><svg viewBox="0 0 10 10"><path fill="none" stroke="#aaa" d="M0 1.500h9L5 7z"/></svg></button>
    <button class="all" disabled>Alle suchen</button>
    <label><input type="checkbox">Groß- und Kleinschreibung beachten</label>
    <i class="sep"></i>
    <button class="tool" aria-label="Suchen und Ersetzen"><svg class="ico"><use href="#find"/></svg></button>
    <i class="sep"></i>
  </div>

  <footer class="statusbar">
    <span class="c-save"><svg><use href="#gsave"/></svg></span>
    <span class="c-page">Seite 1 von 1</span>
    <span class="c-words">0 Wörter, 0 Zeichen</span>
    <span class="c-gap"></span>
    <span class="c-style">Standard</span>
    <span class="c-lang">Deutsch (Deutschland)</span>
    <span class="c-mode"><svg width="22" height="12" viewBox="0 0 22 12"><path class="b" d="M.500 2.500h12v6H.500z"/><path class="k" d="M16 .500h2l.5.500.5-.5h2M18.500 1v10M16 11.500h2l.5-.5.5.500h2"/></svg></span>
    <span class="c-views"><svg width="56" height="13" viewBox="0 0 56 13"><path fill="#0063b1" d="M1 1h6l3 3v9H1z"/><path class="w" d="M14.500 1.500h5l3 3v8h-8zM19.500 1.500v3h3M23.500 1.500h5l3 3v8h-8zM28.500 1.500v3h3M39.500 1.500h6v11h-9v-8zM39.500 1.500v3h-3M45.500 1.500h4l3 3v8h-7zM49.500 1.500v3h3"/></svg></span>
    <span class="c-zoom"><button>−</button><input type="range" min="0" max="100" value="52" aria-label="Zoom"><button>+</button></span>
    <span class="c-pct">140 %</span>
  </footer>

  <span class="badge p1">1</span><span class="badge p2">2</span><span class="badge p3">3</span><span class="badge p4">4</span><span class="badge p5">5</span><span class="badge p6">6</span><span class="badge p7">7</span><span class="badge p8">8</span><span class="badge p9">9</span><span class="badge p10">10</span><span class="badge p11">11</span>
</main>

<table class="legend">
  <tbody>
    <tr><th><span class="badge">1</span></th><td class="wide-col">Titelleiste</td><th><span class="badge">7</span></th><td>Seitenleiste</td></tr>
    <tr><th><span class="badge">2</span></th><td>Menüleiste</td><th><span class="badge">8</span></th><td>Registerleiste</td></tr>
    <tr><th><span class="badge">3</span></th><td>Symbolleiste „Standard“</td><th><span class="badge">9</span></th><td>Arbeitsbereich</td></tr>
    <tr><th><span class="badge">4</span></th><td>Symbolleiste „Formatierungen“</td><th><span class="badge">10</span></th><td>Suchleiste</td></tr>
    <tr><th><span class="badge">5</span></th><td>Symbolleiste „Zeichnung“</td><th><span class="badge">11</span></th><td>Statusleiste</td></tr>
    <tr><th><span class="badge">6</span></th><td>Lineale / /Tabulatoren</td><th></th><td></td></tr>
  </tbody>
</table>
</body>
</html>
```

FILE: styles.css
```css
* { box-sizing: border-box; }

body {
  margin: 0;
  padding: 6px 0 1px 31px;
  height: 100vh;
  min-height: 800px;
  display: flex;
  flex-direction: column;
  gap: 16px;
  background: #fff;
  color: #1a1a1a;
  font: 11px/16px Roboto, "Open Sans", sans-serif;
}

button, input, select { font: inherit; color: inherit; }
button { border: 0; padding: 0; background: none; display: flex; align-items: center; justify-content: center; flex: none; }
h1, h2 { margin: 0; font-size: inherit; }
.sprite { position: absolute; width: 0; height: 0; }
svg { display: block; flex: none; }

/* icon paints */
.k { fill: none; stroke: #4a4a4a; }
.w { fill: #fafafa; stroke: #555; }
.g { fill: none; stroke: #b5b5b5; }
.b { fill: none; stroke: #1e8bcd; }
.b.w { fill: #fff; stroke: #1e8bcd; }
.bt { fill: #1e8bcd; }
.ico { width: 16px; height: 16px; }
.ico.wide { width: 18px; height: 18px; }

.window {
  position: relative;
  flex: 1;
  min-height: 0;
  display: flex;
  flex-direction: column;
  border: 1px solid #a8a8a8;
  border-bottom: 2px solid #1a1a1a;
  background: #efefef;
}

/* title, menus, toolbars */
.chrome { background: linear-gradient(#fff 30%, #f0f0f0); border-bottom: 1px solid #bdbdbd; overflow: hidden; flex: none; }
.titlebar { height: 20px; display: flex; align-items: center; }
.title { flex: 1; font-weight: 400; padding-left: 3px; }
.winbuttons { display: flex; }
.winbuttons button { width: 43px; }
.winbuttons svg { width: 10px; height: 10px; }
.menubar { height: 21px; display: flex; align-items: center; gap: 14px; padding-left: 7px; }
.toolbar { height: 26px; display: flex; align-items: center; padding-left: 1px; }
.toolbar.format { height: 28px; padding: 1px 0 0 1px; }
.tool { width: 24px; height: 24px; }
.on { background: #c5e1f9; box-shadow: inset 0 0 0 1px #a5d0f2; }
.toolbar .on { margin: 0 1px; }
.drop { width: 9px; height: 24px; }
.drop::before { content: ""; border: 3px solid transparent; border-top-color: #000; border-bottom: 0; }
.drop.off::before { border-top-color: #999; }
.sep { width: 1px; height: 14px; margin: 0 2px; background: #d4d4d4; flex: none; }

.glyph { font-size: 15px; color: #3c3c3c; }
.glyph u { text-decoration-color: #1e8bcd; text-underline-offset: 3px; }
.glyph s { text-decoration-color: #1e8bcd; }
.glyph.small { font-size: 13px; font-weight: 500; }
.glyph sup, .glyph sub { font-size: 8px; line-height: 0; color: #1e8bcd; }

.combo { display: grid; height: 20px; border: 1px solid #8a8a8a; background: #fff; }
.combo > * { grid-area: 1 / 1; }
.combo select, .combo input { appearance: none; border: 0; outline: 0; margin: 0; padding: 0 20px 0 2px; width: 100%; min-width: 0; background: none; }
.combo span { justify-self: end; width: 15px; display: flex; align-items: center; justify-content: center; background: #e1e1e1; border-left: 1px solid #acacac; pointer-events: none; }
.combo svg { width: 8px; height: 8px; }
.combo input::placeholder { color: #8a8a8a; opacity: 1; }
.w-style { width: 154px; margin-right: 1px; }
.w-font { width: 168px; margin-right: 6px; }
.w-size { width: 55px; margin-right: 1px; }
.w-search { width: 183px; }

/* working area */
.work { flex: 1; min-height: 0; display: flex; overflow: hidden; }
.toolbox { width: 37px; padding: 3px 5px 0 0; overflow: hidden; }
.toolbox div { height: 26px; display: flex; align-items: center; justify-content: center; }
.toolbox .drop { width: 8px; }
.toolbox hr { width: 16px; height: 1px; border: 0; margin: 1px auto 2px; background: #cfcfcf; }
.toolbox .more { height: 22px; width: 100%; align-items: flex-end; padding-bottom: 1px; }

.num { font: 10px Roboto, sans-serif; fill: #808080; text-anchor: middle; }
.vruler { width: 14px; padding-top: 45px; overflow: hidden; flex: none; }
.canvas { flex: 1; min-width: 0; overflow: hidden; display: flex; flex-direction: column; align-items: center; padding: 4px 0 0 2px; gap: 20px; }
.sheet { width: 1017px; flex: 1; flex-shrink: 0; padding: 96px 96px 0; background: #fff; border: 1px solid #b5b5b5; border-bottom: 0; box-shadow: 0 0 3px #999; }
.textarea { height: 100%; border: 1px solid #c8c8c8; border-bottom: 0; display: flex; align-items: flex-start; }
.caret { width: 2px; height: 23px; background: #000; }
.pilcrow { font: 20px/24px "Liberation Serif", serif; color: #2d8fd8; }

.scroll { display: flex; flex-direction: column; align-items: center; background: #f0f0f0; }
.scroll i { width: 100%; background: #cdcdcd; }
.scroll svg { width: 8px; height: 8px; }
.scroll svg:last-child { margin-top: auto; }
.main-scroll { width: 14px; padding: 4px 0 3px; gap: 4px; flex: none; margin-right: 1px; }
.main-scroll i { height: 257px; }

.sidebar { position: relative; flex: none; width: 243px; display: flex; border-left: 1px solid #a8a8a8; }
.handle { position: absolute; left: -1px; top: 295px; width: 5px; height: 54px; background: #696969; }
.handle::before { content: ""; border: 3px solid transparent; border-left-color: #fff; border-right: 0; }
.panel { flex: 1; min-width: 0; display: flex; flex-direction: column; padding: 0 5px 5px 10px; }
.panelhead { height: 27px; display: flex; align-items: center; gap: 8px; margin-left: -4px; flex: none; }
.panelhead h2 { flex: 1; margin-left: -3px; font-weight: 700; color: #000; }
.panelhead button { width: 6px; }
.grip { width: 2px; height: 10px; background: repeating-linear-gradient(#555 0 1px, transparent 1px 3px); }
.stylebar { height: 24px; display: flex; align-items: center; flex: none; }
.stylebar button { width: 18px; height: 20px; }
.stylebar svg { width: 13px; height: 13px; }
.stylebar .push { margin-left: auto; }
.stylebar .drop { width: 8px; }
.listbox { flex: 1; min-height: 0; display: flex; border: 1px solid #8a93a0; background: #fff; overflow: hidden; }
.listbox ul { flex: 1; min-width: 0; margin: 0; padding: 0; list-style: none; overflow: hidden; font: 15px/23px "Liberation Sans", Arial, sans-serif; }
.listbox li { height: 23px; padding-left: 1px; white-space: nowrap; }
.listbox .sel { background: #0078d7; color: #fff; }
.listbox .note { height: 25px; font-size: 12px; line-height: 25px; }
.listbox .hair { height: 25px; font-size: 8px; line-height: 25px; }
.listbox .head { height: 30px; font-size: 20px; line-height: 30px; font-weight: 700; color: #000; }
.listbox .remark { height: 18px; font-size: 12px; line-height: 18px; }
.list-scroll { width: 14px; padding: 4px 0; }
.list-scroll i { height: 90px; margin-top: 181px; }
.checks { height: 20px; display: flex; align-items: center; justify-content: space-between; flex: none; white-space: nowrap; }
label { display: flex; align-items: center; gap: 2px; }
input[type="checkbox"] { appearance: none; width: 10px; height: 10px; margin: 0; border: 1px solid #444; background: #fff; display: grid; place-items: center; }
input[type="checkbox"]:checked::before { content: ""; width: 6px; height: 3px; border: 1px solid #333; border-width: 0 0 1px 1px; rotate: -45deg; }

.tabs { width: 27px; display: flex; flex-direction: column; align-items: center; padding-right: 1px; }
.tabs button { width: 24px; height: 26px; }
.tabs .on { height: 24px; }
.tabs .menu { height: 21px; }
.tabs .menu svg { width: 8px; height: 8px; }

/* search and status */
.searchbar { height: 29px; display: flex; align-items: center; padding-left: 2px; border-top: 1px solid #c8c8c8; flex: none; }
.searchbar .tool { width: 24px; }
.searchbar .sep { margin: 0 4px; }
.next { margin-left: 33px; width: 12px; }
.next svg { width: 10px; height: 10px; }
.all { margin: 0 4px 0 5px; }
.all:disabled { color: #9a9a9a; }
.statusbar { height: 17px; display: flex; align-items: center; border-top: 1px solid #a8a8a8; flex: none; }
.statusbar span { height: 16px; display: flex; align-items: center; padding: 2px 0 0 7px; border-right: 1px solid #cdcdcd; white-space: nowrap; flex: none; }
.c-save { width: 23px; }
.statusbar .c-save svg { width: 12px; height: 12px; margin-left: -1px; }
.c-page { width: 204px; }
.c-words { width: 235px; }
.c-gap { width: 35px; }
.c-style { width: 185px; }
.statusbar .c-lang { flex: 0 1 244px; justify-content: center; border: 0; }
.statusbar .c-mode { flex: 1; padding-left: 64px; }
.statusbar .c-views { width: 66px; }
.statusbar .c-zoom { width: 106px; padding: 2px 4px 0; gap: 4px; font-size: 15px; }
.c-zoom button { width: 9px; }
.statusbar .c-pct { width: 41px; padding-left: 6px; border: 0; }
input[type="range"] { appearance: none; flex: 1; min-width: 0; margin: 0; height: 12px; background: linear-gradient(#777, #777) center / 100% 1px no-repeat; }
input[type="range"]::-webkit-slider-thumb { appearance: none; width: 4px; height: 8px; border: 1px solid #777; border-radius: 1px; background: #ddd; }

/* numbered markers */
.badge {
  display: inline-grid;
  place-items: center;
  width: 35px;
  height: 35px;
  border: 2px solid #000;
  border-radius: 50%;
  background: #ff0;
  color: #000;
  font: 700 17px/20px "Liberation Sans", Arial, sans-serif;
}
.window > .badge { position: absolute; }
.p1 { left: -32px; top: -7px; }
.p2 { left: -32px; top: 18px; }
.p3 { left: -32px; top: 43px; }
.p4 { left: -32px; top: 68px; }
.p5 { left: -1px; top: 131px; }
.p6 { left: 33px; top: 94px; }
.p7 { right: 84px; top: 98px; }
.p8 { right: 0; top: 350px; }
.p9 { left: calc(50% - 123px); top: 393px; }
.p10 { left: 209px; bottom: 15px; }
.p11 { left: 133px; bottom: -9px; }

.legend { flex: none; align-self: flex-start; margin-left: 1px; border-collapse: collapse; font: 25px/28px "Liberation Sans", Arial, sans-serif; color: #000; }
.legend th, .legend td { height: 43px; padding: 0; border: 1px solid #000; }
.legend th { width: 49px; line-height: 0; vertical-align: middle; }
.legend td { width: 276px; padding: 4px 4px 0; vertical-align: top; }
.legend th + .wide-col { width: 384px; }
.legend .wide-col + th { width: 51px; }
```
